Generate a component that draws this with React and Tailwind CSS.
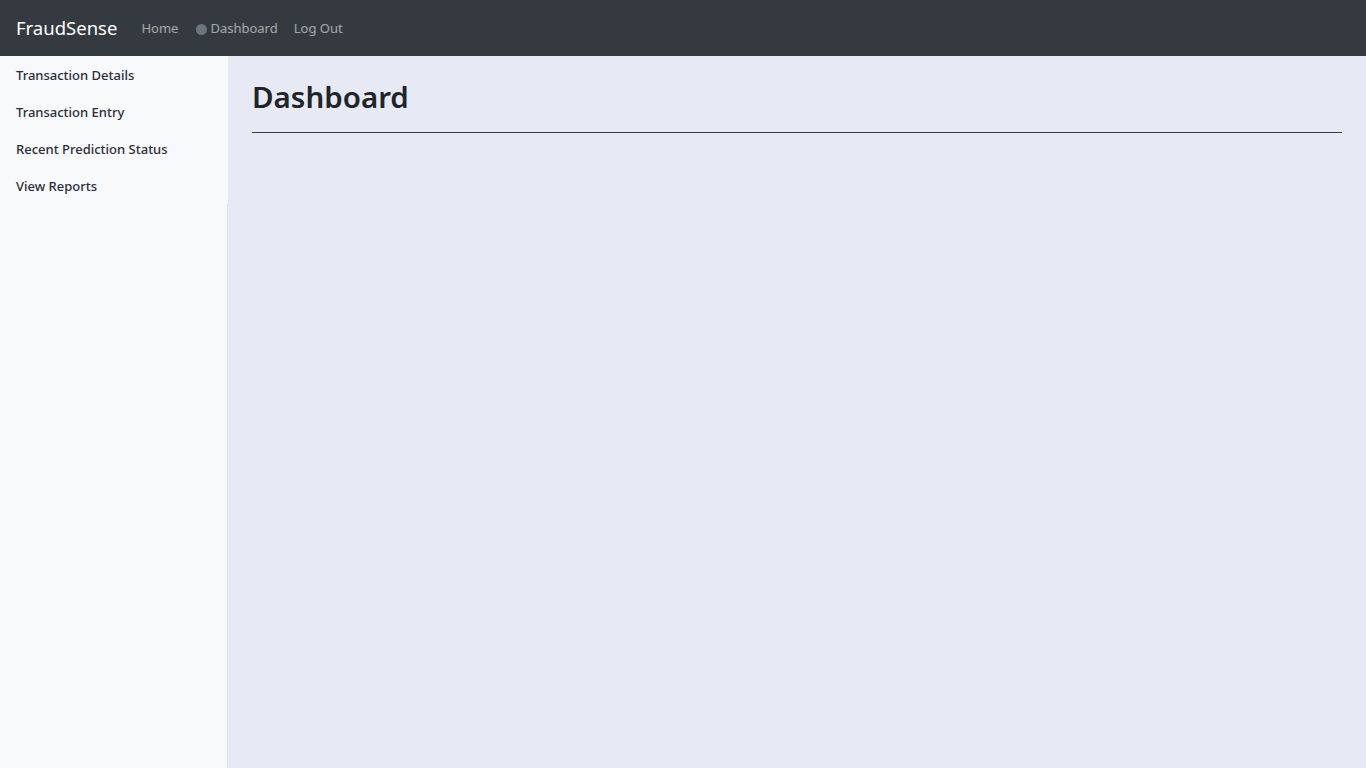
export default function App() {
  const links = ['Transaction Details', 'Transaction Entry', 'Recent Prediction Status', 'View Reports'];

  return (
    <div className="min-h-screen flex flex-col bg-[#e7e9f5] font-['Segoe_UI','Noto_Sans',sans-serif] text-[#212529]">
      <nav className="h-14 bg-[#343a40] flex items-center px-4">
        <a href="#" className="text-white text-[18.5px] mr-6 -mt-px">FraudSense</a>
        <div className="flex items-center text-[13px] text-white/55 mt-0.5">
          <a href="#" className="mr-[18px]">Home</a>
          <a href="#" className="flex items-center mr-4">
            <span className="w-[11px] h-[11px] rounded-full bg-[#6c757d] mr-[3px]"></span>
            Dashboard
          </a>
          <a href="#">Log Out</a>
        </div>
      </nav>

      <div className="flex flex-1">
        <aside className="w-[228px] flex flex-col">
          <ul className="bg-[#f8f9fa]">
            {links.map((l) => (
              <li key={l}>
                <a href="#" className="block px-4 pt-[9px] pb-[7px] text-[13px] leading-[21px] font-medium text-[#2c2c3a]">{l}</a>
              </li>
            ))}
          </ul>
          <div className="flex-1 bg-[#f8f9fa] border-r border-[#dee2e6]"></div>
        </aside>

        <main className="flex-1 px-6 pt-[23px]">
          <h1 className="text-[29.5px] leading-[1.2] font-semibold pb-[18px] border-b border-[#3a3b4c]">Dashboard</h1>
        </main>
      </div>
    </div>
  );
}
